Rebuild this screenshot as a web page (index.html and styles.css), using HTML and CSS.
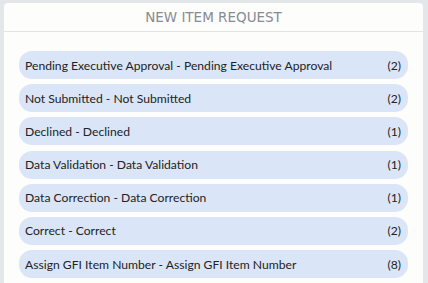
FILE: index.html
```html
<!DOCTYPE html>
<html>

<head>
    <meta charset='utf-8'>
    <title>New Item Request</title>
    <link rel="stylesheet" href="styles.css">
</head>

<body>
    <div class="card">
        <div class="card-header">NEW ITEM REQUEST</div>
        <div class="card-body">
            <div class="status"><span>Pending Executive Approval - Pending Executive Approval</span><span>(2)</span></div>
            <div class="status"><span>Not Submitted - Not Submitted</span><span>(2)</span></div>
            <div class="status"><span>Declined - Declined</span><span>(1)</span></div>
            <div class="status"><span>Data Validation - Data Validation</span><span>(1)</span></div>
            <div class="status"><span>Data Correction - Data Correction</span><span>(1)</span></div>
            <div class="status"><span>Correct - Correct</span><span>(2)</span></div>
            <div class="status"><span>Assign GFI Item Number - Assign GFI Item Number</span><span>(8)</span></div>
        </div>
    </div>
</body>
</html>
```

FILE: styles.css
```css
body {
    margin: 0;
    padding: 3px 5px 0 4px;
    background: #e4e7e9;
    font-family: Lato, "Liberation Sans", sans-serif;
}

.card {
    background: #fdfdfb;
    border-radius: 4px;
    height: 300px;
}

.card-header {
    height: 28px;
    line-height: 28px;
    text-align: center;
    font-family: "DejaVu Sans", Verdana, sans-serif;
    font-size: 13.5px;
    color: #868b94;
    border-bottom: 1px solid #e2e4e6;
}

.card-body {
    padding: 19px 15px 0 15px;
    display: flex;
    flex-direction: column;
    gap: 5.2px;
}

.status {
    display: flex;
    justify-content: space-between;
    align-items: center;
    height: 28px;
    padding: 0 7px 0 6px;
    background: #dae6f8;
    border-radius: 13px;
    font-size: 12.15px;
    color: #222;
}
```
